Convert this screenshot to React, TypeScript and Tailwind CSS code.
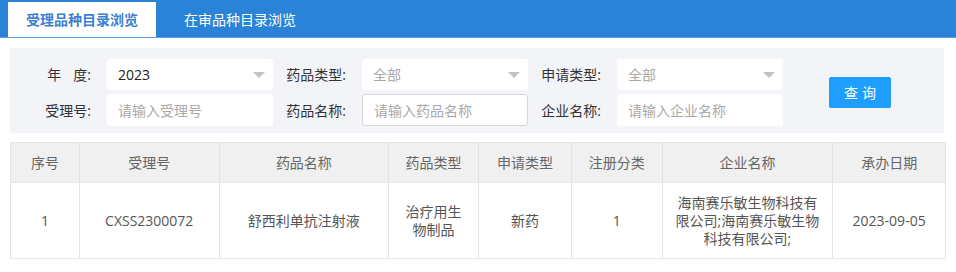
import React from 'react';

const font = { fontFamily: '"Open Sans", "Noto Sans CJK SC", sans-serif' };

function Arrow() {
  return (
    <svg width="12" height="6" viewBox="0 0 12 6" className="shrink-0">
      <path d="M0 0 L12 0 L6 6 Z" fill="#c2c2c2" />
    </svg>
  );
}

function Select({ value, muted }: { value: string; muted?: boolean }) {
  return (
    <div className="w-[166px] h-[31px] bg-white rounded-[3px] flex items-center justify-between pl-[11px] pr-[8px]">
      <span className={muted ? 'text-[#a9a9a9]' : 'text-[#222]'}>{value}</span>
      <Arrow />
    </div>
  );
}

function Input({ placeholder, focused }: { placeholder: string; focused?: boolean }) {
  return (
    <div
      className={
        'w-[166px] h-[32px] bg-white rounded-[3px] flex items-center pl-[11px] text-[#a9a9a9] ' +
        (focused ? 'border border-[#d6d6d6] pl-[10px]' : '')
      }
    >
      {placeholder}
    </div>
  );
}

function Label({ children }: { children: React.ReactNode }) {
  return <div className="w-[73px] mr-[16px] text-right text-[#333] whitespace-nowrap">{children}</div>;
}

const cols = [
  { title: '序号', w: 'w-[68px]' },
  { title: '受理号', w: 'w-[140px]' },
  { title: '药品名称', w: 'w-[170px]' },
  { title: '药品类型', w: 'w-[90px]' },
  { title: '申请类型', w: 'w-[93px]' },
  { title: '注册分类', w: 'w-[91px]' },
  { title: '企业名称', w: 'w-[171px]' },
  { title: '承办日期', w: 'w-[113px]' },
];

const row = [
  '1',
  'CXSS2300072',
  '舒西利单抗注射液',
  '治疗用生物制品',
  '新药',
  '1',
  '海南赛乐敏生物科技有限公司;海南赛乐敏生物科技有限公司;',
  '2023-09-05',
];

export default function App() {
  return (
    <div className="w-[956px] h-[272px] bg-white text-[14px]" style={font}>
      {/* Tabs */}
      <div className="h-[38px] bg-[#2a83d6] flex items-end pl-[8px] gap-[10px] border-b border-[#5a9fe0]">
        <div className="w-[148px] h-[35px] bg-white flex items-center justify-center text-[#3a7fd2] font-semibold">
          受理品种目录浏览
        </div>
        <div className="w-[148px] h-[35px] flex items-center justify-center text-white">在审品种目录浏览</div>
      </div>

      {/* Filter panel */}
      <div className="mx-[10px] mt-[10px] w-[934px] bg-[#f3f4f8] pt-[11px] pb-[7px] pl-[8px] flex items-center">
        <div className="flex flex-col gap-[4px]">
          <div className="flex items-center">
            <Label>
              <span>年</span>
              <span className="ml-[12px]">度:</span>
            </Label>
            <Select value="2023" />
            <Label>药品类型:</Label>
            <Select value="全部" muted />
            <Label>申请类型:</Label>
            <Select value="全部" muted />
          </div>
          <div className="flex items-center">
            <Label>受理号:</Label>
            <Input placeholder="请输入受理号" />
            <Label>药品名称:</Label>
            <Input placeholder="请输入药品名称" focused />
            <Label>企业名称:</Label>
            <Input placeholder="请输入企业名称" />
          </div>
        </div>
        <button className="ml-[46px] w-[62px] h-[31px] bg-[#1e9fff] rounded-[2px] text-white tracking-[4px] pl-[4px]">
          查询
        </button>
      </div>

      {/* Table */}
      <div className="mx-[10px] mt-[9px] w-[936px] border border-[#e6e6e6] text-[#666]">
        <div className="flex h-[39px] bg-[#f0f0f0]">
          {cols.map((c, i) => (
            <div
              key={c.title}
              className={c.w + ' flex items-center justify-center ' + (i > 0 ? 'border-l border-[#e2e2e2]' : '')}
            >
              {c.title}
            </div>
          ))}
        </div>
        <div className="flex h-[76px] border-t border-[#e6e6e6]">
          {row.map((v, i) => (
            <div
              key={i}
              className={
                cols[i].w +
                ' flex items-center justify-center text-center leading-[18px] px-[12px] text-[#555] ' +
                (i > 0 ? 'border-l border-[#e6e6e6]' : '')
              }
            >
              {i === 3 ? (
                <span>
                  治疗用生
                  <br />
                  物制品
                </span>
              ) : (
                v
              )}
            </div>
          ))}
        </div>
      </div>
    </div>
  );
}
